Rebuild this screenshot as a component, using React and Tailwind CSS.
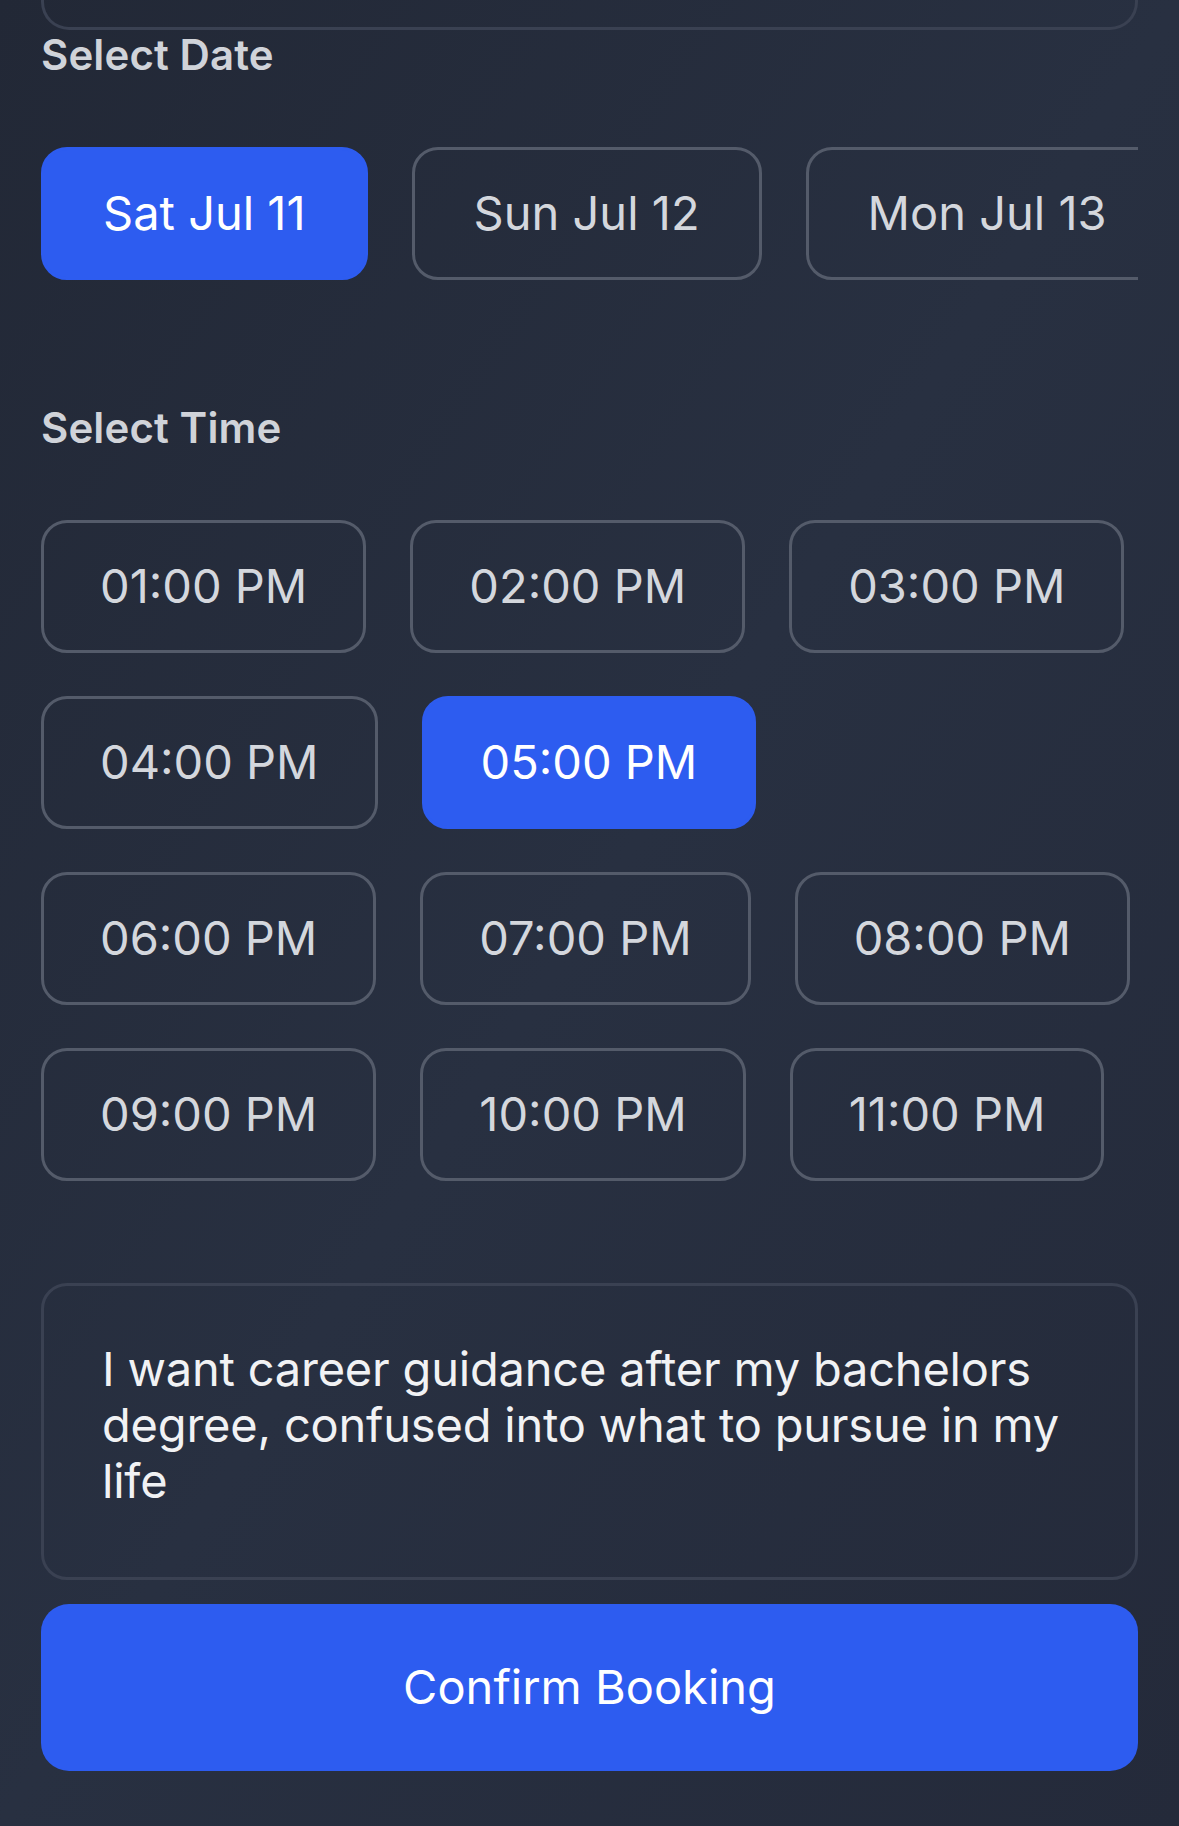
import React from "react";

const dates = ["Sat Jul 11", "Sun Jul 12", "Mon Jul 13"];

const timeRows = [
  ["01:00 PM", "02:00 PM", "03:00 PM"],
  ["04:00 PM", "05:00 PM"],
  ["06:00 PM", "07:00 PM", "08:00 PM"],
  ["09:00 PM", "10:00 PM", "11:00 PM"],
];

const selectedDate = "Sat Jul 11";
const selectedTime = "05:00 PM";

const Chip = ({ label, active, wide }) => (
  <button
    className={[
      "h-[133px] shrink-0 rounded-[26px] border-[3px] text-[47px]",
      wide ? "px-[59px]" : "px-[56px]",
      active
        ? "border-[#2d5cf0] bg-[#2d5cf0] text-white"
        : "border-[#545b6a] bg-transparent text-[#d4d7dd]",
    ].join(" ")}
  >
    {label}
  </button>
);

export default function App() {
  return (
    <div
      className="min-h-[1826px] w-full bg-gradient-to-br from-[#222836] via-[#283041] to-[#242a3a] px-[41px]"
      style={{ fontFamily: "Inter, 'Noto Sans', sans-serif" }}
    >
      {/* bottom of the card above, scrolled off */}
      <div className="h-[30px] rounded-b-[28px] border-x-[3px] border-b-[3px] border-[#3a4152]" />

      <h3 className="text-[42px] font-semibold leading-[50px] tracking-[0.1px] text-[#d0d3d9]">
        Select Date
      </h3>

      <div className="mt-[67px] flex gap-[44px] overflow-hidden">
        {dates.map((d) => (
          <Chip key={d} label={d} active={d === selectedDate} wide />
        ))}
      </div>

      <h3 className="mt-[123px] text-[42px] font-semibold leading-[50px] tracking-[0.1px] text-[#d0d3d9]">
        Select Time
      </h3>

      <div className="mt-[67px] flex flex-col gap-[43px]">
        {timeRows.map((row, i) => (
          <div key={i} className="flex gap-[44px]">
            {row.map((t) => (
              <Chip key={t} label={t} active={t === selectedTime} />
            ))}
          </div>
        ))}
      </div>

      <div className="mt-[102px] h-[297px] rounded-[26px] border-[3px] border-[#3a4152] px-[58px] pt-[55px]">
        <p className="text-[47px] leading-[56px] tracking-[-0.2px] text-[#f1f2f4]">
          I want career guidance after my bachelors degree, confused into what
          to pursue in my life
        </p>
      </div>

      <button className="mt-[24px] h-[167px] w-full rounded-[28px] bg-[#2d5cf0] text-[47px] text-white">
        Confirm Booking
      </button>
    </div>
  );
}
